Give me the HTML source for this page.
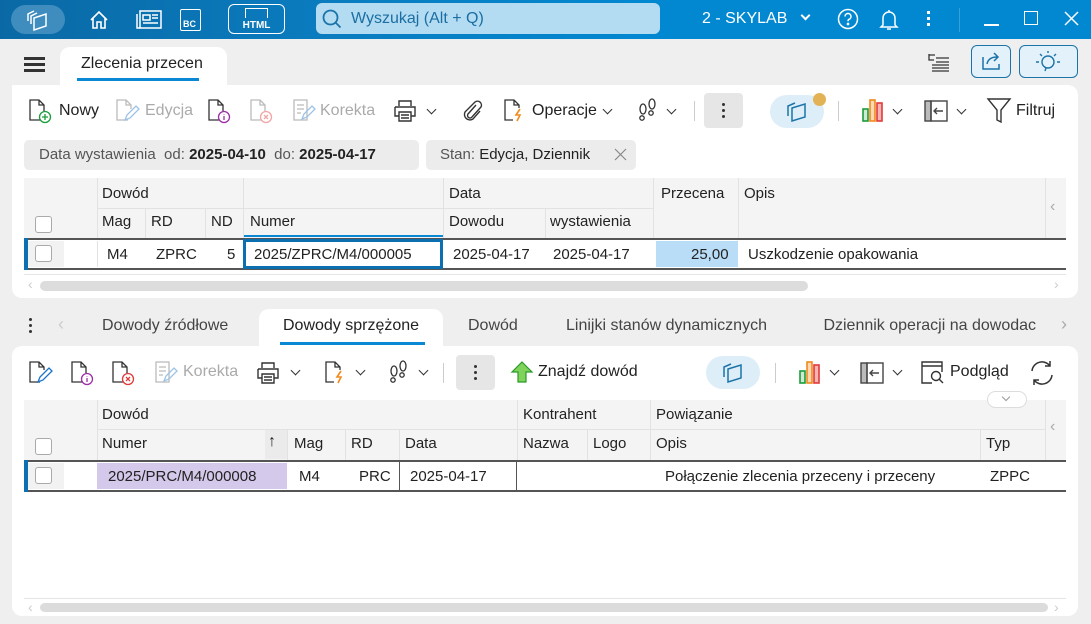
<!DOCTYPE html>
<html><head><meta charset="utf-8"><style>
*{box-sizing:border-box;margin:0;padding:0}
body{width:1091px;height:624px;overflow:hidden;background:#efefef;font-family:"Liberation Sans",sans-serif;font-size:15px;color:#222;position:relative}
.a{position:absolute}
.top{left:0;top:0;width:1091px;height:39px;background:linear-gradient(90deg,#0a69a5 0%,#0a7cbf 30%,#0288d1 60%,#0288d1 100%)}
.w{color:#fff}
.panel{background:#fff;border-radius:10px}
.tb{font-size:16px;color:#222}
.dis{color:#aaa}
.hdr{background:#f4f4f4}
.cell{position:absolute;font-size:15px;white-space:nowrap}
.vl{position:absolute;width:1px;background:#e2e2e2}
.cb{position:absolute;width:17px;height:17px;border:1px solid #aaa;border-radius:3px;background:#fff}
.chev{font-size:0;width:7px;height:7px;border-right:1.5px solid #333;border-bottom:1.5px solid #333;transform:rotate(45deg);margin-top:5px}
</style></head><body>
<div class="a top"></div>
<div class="a" style="left:11px;top:5px;width:54px;height:29px;border-radius:15px;background:#3f8cbf"></div>
<svg class="a" style="left:25px;top:9px" width="26" height="22" viewBox="0 0 26 22" fill="none" stroke="#fff" stroke-width="1.5"><path d="M3 12V5l6-3M6 15V7l6-3"/><path d="M9 9l12-4v12l-12 4z"/></svg>
<svg class="a" style="left:88px;top:9px" width="22" height="22" viewBox="0 0 22 22" fill="none" stroke="#fff" stroke-width="1.6"><path d="M3 11L11 3l8 8M5 9v10h4v-6h4v6h4V9"/></svg>
<svg class="a" style="left:136px;top:10px" width="26" height="20" viewBox="0 0 26 20" fill="none" stroke="#fff" stroke-width="1.5"><rect x="4" y="1" width="21" height="17"/><path d="M1 4v14h3M7 5h7v5H7zM16 5h6M16 8h6M7 13h15"/></svg>
<div class="a" style="left:180px;top:9px;width:21px;height:22px;border:1.5px solid #fff;border-radius:2px;color:#fff;font-size:9px;font-weight:bold;padding:9px 0 0 2px">BC</div>
<div class="a" style="left:228px;top:4px;width:57px;height:30px;border:1.5px solid #fff;border-radius:6px;color:#fff;font-size:10px;font-weight:bold;text-align:center;padding-top:15px">HTML</div>
<div class="a" style="left:245px;top:8px;width:23px;height:10px;border:1.3px solid #fff;border-bottom:none"></div>
<div class="a" style="left:316px;top:3px;width:344px;height:31px;border-radius:6px;background:#b3dcf2"></div>
<svg class="a" style="left:321px;top:8px" width="22" height="22" viewBox="0 0 22 22" fill="none" stroke="#1b73a8" stroke-width="1.8"><circle cx="9.5" cy="9.5" r="7"/><path d="M14.5 14.5l5 5"/></svg>
<div class="a" style="left:351px;top:10px;font-size:16px;color:#1b6ea3">Wyszukaj (Alt + Q)</div>
<div class="a w" style="left:702px;top:10px;font-size:16px">2 - SKYLAB</div>
<div class="a" style="left:802px;top:12px;width:7px;height:7px;border-right:2px solid #fff;border-bottom:2px solid #fff;transform:rotate(45deg)"></div>
<svg class="a" style="left:837px;top:8px" width="22" height="22" viewBox="0 0 22 22" fill="none" stroke="#fff" stroke-width="1.5"><circle cx="11" cy="11" r="9.5"/><path d="M8 8.5a3 3 0 1 1 4 2.8c-.8.4-1 1-1 2"/><circle cx="11" cy="16" r=".6" fill="#fff"/></svg>
<svg class="a" style="left:879px;top:8px" width="20" height="24" viewBox="0 0 20 24" fill="none" stroke="#fff" stroke-width="1.5"><path d="M4 17V10a6 6 0 0 1 12 0v7l2 2H2zM8 21h4M10 2v2"/></svg>
<div class="a" style="left:927px;top:11px;width:3px;height:3px;background:#fff;box-shadow:0 6px #fff,0 12px #fff"></div>
<div class="a" style="left:959px;top:8px;width:1px;height:24px;background:#3a9fd8"></div>
<div class="a" style="left:984px;top:24px;width:15px;height:1.5px;background:#fff"></div>
<div class="a" style="left:1024px;top:11px;width:14px;height:14px;border:1.5px solid #fff"></div>
<svg class="a" style="left:1064px;top:11px" width="15" height="15"><path d="M1 1l13 13M14 1L1 14" stroke="#fff" stroke-width="1.5"/></svg>

<!-- tab row -->
<div class="a" style="left:24px;top:57px;width:21px;height:3px;background:#333;box-shadow:0 6px #333,0 12px #333"></div>
<div class="a panel" style="left:60px;top:47px;width:167px;height:45px;border-radius:10px 10px 0 0"></div>
<div class="a" style="left:81px;top:55px;font-size:16px;color:#222">Zlecenia przecen</div>
<div class="a" style="left:77px;top:78px;width:122px;height:3px;background:#0b88d4"></div>
<svg class="a" style="left:927px;top:52px" width="24" height="22" fill="none" stroke="#333" stroke-width="1.3"><path d="M2 2v6h5M2 3h6M9 6h13M9 10h13M5 13h17M5 16h17M5 19h17"/></svg>
<div class="a" style="left:971px;top:45px;width:40px;height:33px;border:1.5px solid #1b73a8;border-radius:6px;background:#e3f1fa"></div>
<svg class="a" style="left:981px;top:51px" width="22" height="20" fill="none" stroke="#1b73a8" stroke-width="1.5"><path d="M2 6v12h16v-5M6 13c1-5 5-7 10-7M13 2l4 4-4 4"/></svg>
<div class="a" style="left:1019px;top:45px;width:59px;height:33px;border:1.5px solid #1b73a8;border-radius:6px;background:#e3f1fa"></div>
<svg class="a" style="left:1034px;top:50px" width="28" height="24" fill="none" stroke="#1b73a8" stroke-width="1.4"><circle cx="14" cy="12" r="6"/><path d="M2 12h3M23 12h3M6 4l2 2M22 4l-2 2M14 1v2M12 18l-1 3"/></svg>

<!-- upper panel -->
<div class="a panel" style="left:12px;top:85px;width:1066px;height:213px;border-radius:0 10px 10px 10px"></div>
<svg class="a" style="left:28px;top:98px" width="26" height="26" fill="none" stroke="#333" stroke-width="1.3"><path d="M13 22H2V2h9l5 5v6M11 2v5h5"/><circle cx="17" cy="19" r="5.5" stroke="#1a9c3a"/><path d="M17 16v6M14 19h6" stroke="#1a9c3a"/></svg>
<div class="a tb" style="left:59px;top:102px">Nowy</div>
<svg class="a" style="left:115px;top:98px" width="26" height="26" fill="none" stroke="#bbb" stroke-width="1.3"><path d="M13 22H2V2h9l5 5v4M11 2v5h5"/><path d="M10 22l2-5 9-9 3 3-9 9z" stroke="#9cc3e6"/></svg>
<div class="a tb dis" style="left:145px;top:102px">Edycja</div>
<svg class="a" style="left:207px;top:98px" width="26" height="26" fill="none" stroke="#333" stroke-width="1.3"><path d="M13 22H2V2h9l5 5v6M11 2v5h5"/><circle cx="17" cy="19" r="5.5" stroke="#9c2fa8"/><path d="M17 18v4M17 16v.5" stroke="#9c2fa8"/></svg>
<svg class="a" style="left:249px;top:98px" width="26" height="26" fill="none" stroke="#bbb" stroke-width="1.3"><path d="M13 22H2V2h9l5 5v6M11 2v5h5"/><circle cx="17" cy="19" r="5.5" stroke="#f2a6a6"/><path d="M15 17l4 4M19 17l-4 4" stroke="#f2a6a6"/></svg>
<svg class="a" style="left:291px;top:98px" width="26" height="26" fill="none" stroke="#bbb" stroke-width="1.3"><path d="M3 2h13v20H3zM6 7h7M6 11h7M6 15h4"/><path d="M11 21l2-5 8-8 3 3-8 8z" stroke="#9cc3e6"/></svg>
<div class="a tb dis" style="left:320px;top:102px">Korekta</div>
<svg class="a" style="left:392px;top:98px" width="26" height="26" fill="none" stroke="#333" stroke-width="1.4"><path d="M7 8V3h12v5M3 9h20v9h-4M7 18H3V9M7 14h12v9H7zM9 17h8M9 20h8"/></svg>
<div class="a chev" style="left:428px;top:101px">v</div>
<svg class="a" style="left:460px;top:98px" width="24" height="26" fill="none" stroke="#333" stroke-width="1.4"><path d="M16 7l-8 9a2.5 2.5 0 0 0 4 3l9-10a4 4 0 0 0-6-5L5 14a5.5 5.5 0 0 0 8 7l7-8"/></svg>
<svg class="a" style="left:503px;top:98px" width="26" height="26" fill="none" stroke="#333" stroke-width="1.3"><path d="M10 22H2V2h9l5 5v3M11 2v5h5"/><path d="M17 11l-4 6h4l-3 6" stroke="#f08a1c" stroke-width="1.6"/></svg>
<div class="a tb" style="left:532px;top:102px">Operacje</div>
<div class="a chev" style="left:604px;top:101px">v</div>
<svg class="a" style="left:636px;top:98px" width="24" height="26" fill="none" stroke="#333" stroke-width="1.3"><ellipse cx="7" cy="11" rx="3" ry="5"/><circle cx="6" cy="20" r="2.2"/><ellipse cx="16" cy="6" rx="3" ry="5"/><circle cx="15" cy="15" r="2.2"/></svg>
<div class="a chev" style="left:668px;top:101px">v</div>
<div class="a" style="left:694px;top:101px;width:1px;height:20px;background:#ccc"></div>
<div class="a" style="left:704px;top:93px;width:39px;height:35px;background:#e6e6e6;border-radius:4px"></div>
<div class="a" style="left:722px;top:103px;width:3px;height:3px;background:#333;box-shadow:0 6px #333,0 12px #333;border-radius:50%"></div>
<div class="a" style="left:770px;top:95px;width:54px;height:33px;background:#ddeef9;border-radius:17px"></div>
<svg class="a" style="left:784px;top:99px" width="26" height="24" fill="none" stroke="#1b73a8" stroke-width="1.5"><path d="M4 17V7l7-3"/><path d="M8 9l13-4v13l-13 4z"/></svg>
<div class="a" style="left:813px;top:93px;width:13px;height:13px;background:#e2b255;border-radius:50%"></div>
<div class="a" style="left:838px;top:101px;width:1px;height:20px;background:#ccc"></div>
<svg class="a" style="left:861px;top:98px" width="28" height="26" stroke-width="1.6"><rect x="2" y="11" width="5" height="12" fill="#cfe9d4" stroke="#1a9c3a"/><rect x="9" y="2" width="5" height="21" fill="#fbd9b4" stroke="#f08a1c"/><rect x="16" y="5" width="5" height="18" fill="#f5b5b5" stroke="#e23a3a"/></svg>
<div class="a chev" style="left:894px;top:101px">v</div>
<svg class="a" style="left:923px;top:98px" width="26" height="26" stroke-width="1.4"><rect x="2" y="3" width="6" height="20" fill="#bbb" stroke="#444"/><rect x="8" y="3" width="16" height="20" fill="none" stroke="#444"/><path d="M20 13h-8M14 10l-3 3 3 3" fill="none" stroke="#444"/></svg>
<div class="a chev" style="left:958px;top:101px">v</div>
<svg class="a" style="left:986px;top:97px" width="26" height="28" fill="none" stroke="#333" stroke-width="1.4"><path d="M2 2h22l-9 11v12l-4-2V13z"/></svg>
<div class="a tb" style="left:1016px;top:102px">Filtruj</div>

<!-- chips -->
<div class="a" style="left:24px;top:140px;width:395px;height:30px;background:#ececec;border-radius:5px"></div>
<div class="a" style="left:39px;top:146px;font-size:15px;color:#555">Data wystawienia &nbsp;od: <b style="color:#222;font-weight:bold">2025-04-10</b> &nbsp;do: <b style="color:#222">2025-04-17</b></div>
<div class="a" style="left:426px;top:140px;width:210px;height:30px;background:#ececec;border-radius:5px"></div>
<div class="a" style="left:440px;top:146px;font-size:15px;color:#555">Stan: <span style="color:#222">Edycja, Dziennik</span></div>
<svg class="a" style="left:614px;top:148px" width="13" height="13"><path d="M1 1l11 11M12 1L1 12" stroke="#888" stroke-width="1.2"/></svg>

<!-- upper grid -->
<div class="a hdr" style="left:24px;top:178px;width:1042px;height:60px"></div>
<div class="a" style="left:97px;top:208px;width:346px;height:1px;background:#e2e2e2"></div>
<div class="a" style="left:443px;top:208px;width:210px;height:1px;background:#e2e2e2"></div>
<div class="a" style="left:243px;top:235px;width:200px;height:2px;background:#0b88d4"></div>
<div class="vl" style="left:97px;top:178px;height:60px"></div>
<div class="vl" style="left:145px;top:208px;height:30px"></div>
<div class="vl" style="left:205px;top:208px;height:30px"></div>
<div class="vl" style="left:243px;top:178px;height:60px"></div>
<div class="vl" style="left:443px;top:178px;height:60px"></div>
<div class="vl" style="left:545px;top:208px;height:30px"></div>
<div class="vl" style="left:653px;top:178px;height:60px"></div>
<div class="vl" style="left:738px;top:178px;height:60px"></div>
<div class="vl" style="left:1045px;top:178px;height:60px"></div>
<div class="cell" style="left:102px;top:185px">Dowód</div>
<div class="cell" style="left:449px;top:185px">Data</div>
<div class="cell" style="left:661px;top:185px">Przecena</div>
<div class="cell" style="left:744px;top:185px">Opis</div>
<div class="cell" style="left:102px;top:213px">Mag</div>
<div class="cell" style="left:151px;top:213px">RD</div>
<div class="cell" style="left:211px;top:213px">ND</div>
<div class="cell" style="left:250px;top:213px">Numer</div>
<div class="cell" style="left:449px;top:213px">Dowodu</div>
<div class="cell" style="left:550px;top:213px">wystawienia</div>
<div class="cb" style="left:35px;top:216px"></div>
<div class="a" style="left:1050px;top:198px;color:#aaa;font-size:16px">&#8249;</div>
<div class="a" style="left:24px;top:238px;width:1042px;height:32px;border-top:2.5px solid #555;border-bottom:2.5px solid #555"></div>
<div class="a" style="left:24px;top:238px;width:4px;height:32px;background:#0b6fb0"></div>
<div class="a" style="left:28px;top:241px;width:36px;height:26px;background:#f2f2f2"></div>
<div class="cb" style="left:35px;top:245px"></div>
<div class="vl" style="left:97px;top:241px;height:26px"></div>
<div class="cell" style="left:107px;top:246px">M4</div>
<div class="cell" style="left:156px;top:246px">ZPRC</div>
<div class="cell" style="left:227px;top:246px">5</div>
<div class="a" style="left:243px;top:239px;width:200px;height:30px;border:3px solid #0b6fb0"></div>
<div class="cell" style="left:254px;top:246px">2025/ZPRC/M4/000005</div>
<div class="cell" style="left:453px;top:246px">2025-04-17</div>
<div class="cell" style="left:553px;top:246px">2025-04-17</div>
<div class="a" style="left:656px;top:241px;width:82px;height:26px;background:#b9ddf6"></div>
<div class="cell" style="left:691px;top:246px">25,00</div>
<div class="cell" style="left:748px;top:246px">Uszkodzenie opakowania</div>
<div class="a" style="left:24px;top:274px;width:1042px;height:1px;background:#e5e5e5"></div>
<div class="a" style="left:40px;top:281px;width:768px;height:10px;background:#dcdcdc;border-radius:5px"></div>
<div class="a" style="left:28px;top:276px;color:#ccc;font-size:14px">&#8249;</div>
<div class="a" style="left:1054px;top:276px;color:#ccc;font-size:14px">&#8250;</div>

<!-- lower tabs -->
<div class="a" style="left:29px;top:318px;width:3px;height:3px;background:#333;box-shadow:0 6px #333,0 12px #333;border-radius:50%"></div>
<div class="a" style="left:58px;top:314px;color:#ccc;font-size:18px">&#8249;</div>
<div class="a panel" style="left:259px;top:309px;width:184px;height:45px;border-radius:10px 10px 0 0"></div>
<div class="a" style="left:102px;top:317px;font-size:16px;color:#444">Dowody źródłowe</div>
<div class="a" style="left:283px;top:317px;font-size:16px;color:#222">Dowody sprzężone</div>
<div class="a" style="left:280px;top:342px;width:145px;height:3px;background:#0b88d4"></div>
<div class="a" style="left:468px;top:317px;font-size:16px;color:#444">Dowód</div>
<div class="a" style="left:566px;top:317px;font-size:16px;color:#444">Linijki stanów dynamicznych</div>
<div class="a" style="left:819px;top:317px;font-size:16px;color:#444;width:234px;overflow:hidden;white-space:nowrap">&nbsp;Dziennik operacji na dowodac</div>
<div class="a" style="left:1061px;top:314px;color:#aaa;font-size:18px">&#8250;</div>

<!-- lower panel -->
<div class="a panel" style="left:12px;top:346px;width:1066px;height:270px"></div>
<svg class="a" style="left:28px;top:360px" width="26" height="26" fill="none" stroke="#333" stroke-width="1.3"><path d="M12 22H2V2h9l5 5v3M11 2v5h5"/><path d="M10 22l2-5 9-9 3 3-9 9z" stroke="#1b73c8"/></svg>
<svg class="a" style="left:70px;top:360px" width="26" height="26" fill="none" stroke="#333" stroke-width="1.3"><path d="M13 22H2V2h9l5 5v6M11 2v5h5"/><circle cx="17" cy="19" r="5.5" stroke="#9c2fa8"/><path d="M17 18v4M17 16v.5" stroke="#9c2fa8"/></svg>
<svg class="a" style="left:111px;top:360px" width="26" height="26" fill="none" stroke="#333" stroke-width="1.3"><path d="M13 22H2V2h9l5 5v6M11 2v5h5"/><circle cx="17" cy="19" r="5.5" stroke="#e23a3a"/><path d="M15 17l4 4M19 17l-4 4" stroke="#e23a3a"/></svg>
<svg class="a" style="left:153px;top:360px" width="26" height="26" fill="none" stroke="#bbb" stroke-width="1.3"><path d="M3 2h13v20H3zM6 7h7M6 11h7M6 15h4"/><path d="M11 21l2-5 8-8 3 3-8 8z" stroke="#9cc3e6"/></svg>
<div class="a tb dis" style="left:183px;top:363px">Korekta</div>
<svg class="a" style="left:255px;top:360px" width="26" height="26" fill="none" stroke="#333" stroke-width="1.4"><path d="M7 8V3h12v5M3 9h20v9h-4M7 18H3V9M7 14h12v9H7zM9 17h8M9 20h8"/></svg>
<div class="a chev" style="left:292px;top:362px">v</div>
<svg class="a" style="left:324px;top:360px" width="26" height="26" fill="none" stroke="#333" stroke-width="1.3"><path d="M10 22H2V2h9l5 5v3M11 2v5h5"/><path d="M17 11l-4 6h4l-3 6" stroke="#f08a1c" stroke-width="1.6"/></svg>
<div class="a chev" style="left:357px;top:362px">v</div>
<svg class="a" style="left:387px;top:360px" width="24" height="26" fill="none" stroke="#333" stroke-width="1.3"><ellipse cx="7" cy="11" rx="3" ry="5"/><circle cx="6" cy="20" r="2.2"/><ellipse cx="16" cy="6" rx="3" ry="5"/><circle cx="15" cy="15" r="2.2"/></svg>
<div class="a chev" style="left:420px;top:362px">v</div>
<div class="a" style="left:443px;top:363px;width:1px;height:20px;background:#ccc"></div>
<div class="a" style="left:456px;top:355px;width:39px;height:35px;background:#e6e6e6;border-radius:4px"></div>
<div class="a" style="left:474px;top:365px;width:3px;height:3px;background:#333;box-shadow:0 6px #333,0 12px #333;border-radius:50%"></div>
<svg class="a" style="left:510px;top:360px" width="24" height="24"><path d="M12 2l10 10h-6v10H8V12H2z" fill="#7fd35a" stroke="#2a9a2a" stroke-width="1.2"/></svg>
<div class="a tb" style="left:538px;top:363px">Znajdź dowód</div>
<div class="a" style="left:706px;top:356px;width:54px;height:33px;background:#ddeef9;border-radius:17px"></div>
<svg class="a" style="left:720px;top:360px" width="26" height="24" fill="none" stroke="#1b73a8" stroke-width="1.5"><path d="M4 17V7l7-3"/><path d="M8 9l13-4v13l-13 4z"/></svg>
<div class="a" style="left:775px;top:363px;width:1px;height:20px;background:#ccc"></div>
<svg class="a" style="left:798px;top:360px" width="28" height="26" stroke-width="1.6"><rect x="2" y="11" width="5" height="12" fill="#cfe9d4" stroke="#1a9c3a"/><rect x="9" y="2" width="5" height="21" fill="#fbd9b4" stroke="#f08a1c"/><rect x="16" y="5" width="5" height="18" fill="#f5b5b5" stroke="#e23a3a"/></svg>
<div class="a chev" style="left:831px;top:362px">v</div>
<svg class="a" style="left:859px;top:360px" width="26" height="26" stroke-width="1.4"><rect x="2" y="3" width="6" height="20" fill="#bbb" stroke="#444"/><rect x="8" y="3" width="16" height="20" fill="none" stroke="#444"/><path d="M20 13h-8M14 10l-3 3 3 3" fill="none" stroke="#444"/></svg>
<div class="a chev" style="left:894px;top:362px">v</div>
<svg class="a" style="left:920px;top:360px" width="26" height="26" fill="none" stroke="#333" stroke-width="1.4"><path d="M12 23H2V2h20v10M2 6h20"/><circle cx="16" cy="16" r="4.5"/><path d="M19 19l4 4"/></svg>
<div class="a tb" style="left:950px;top:363px">Podgląd</div>
<svg class="a" style="left:1029px;top:359px" width="26" height="28" fill="none" stroke="#333" stroke-width="1.5"><path d="M3 12a10 10 0 0 1 18-5M23 16a10 10 0 0 1-18 5M21 2v5h-5M5 26v-5h5"/></svg>

<!-- lower grid -->
<div class="a hdr" style="left:24px;top:400px;width:1042px;height:60px"></div>
<div class="a" style="left:97px;top:429px;width:948px;height:1px;background:#e2e2e2"></div>
<div class="a" style="left:265px;top:430px;width:22px;height:29px;background:#ebebeb"></div>
<div class="vl" style="left:97px;top:400px;height:60px"></div>
<div class="vl" style="left:287px;top:430px;height:30px"></div>
<div class="vl" style="left:345px;top:430px;height:30px"></div>
<div class="vl" style="left:399px;top:430px;height:30px"></div>
<div class="vl" style="left:517px;top:400px;height:60px"></div>
<div class="vl" style="left:587px;top:430px;height:30px"></div>
<div class="vl" style="left:650px;top:400px;height:60px"></div>
<div class="vl" style="left:980px;top:430px;height:30px"></div>
<div class="vl" style="left:1045px;top:400px;height:60px"></div>
<div class="cell" style="left:102px;top:406px">Dowód</div>
<div class="cell" style="left:523px;top:406px">Kontrahent</div>
<div class="cell" style="left:656px;top:406px">Powiązanie</div>
<div class="cell" style="left:102px;top:435px">Numer</div>
<div class="cell" style="left:268px;top:433px;font-size:16px">&#8593;</div>
<div class="cell" style="left:294px;top:435px">Mag</div>
<div class="cell" style="left:351px;top:435px">RD</div>
<div class="cell" style="left:405px;top:435px">Data</div>
<div class="cell" style="left:523px;top:435px">Nazwa</div>
<div class="cell" style="left:593px;top:435px">Logo</div>
<div class="cell" style="left:656px;top:435px">Opis</div>
<div class="cell" style="left:986px;top:435px">Typ</div>
<div class="cb" style="left:35px;top:438px"></div>
<div class="a" style="left:1050px;top:418px;color:#aaa;font-size:16px">&#8249;</div>
<div class="a" style="left:987px;top:391px;width:40px;height:17px;border:1px solid #ddd;border-radius:9px;background:#fff"></div>
<div class="a" style="left:1003px;top:394px;width:6px;height:6px;border-right:1.2px solid #999;border-bottom:1.2px solid #999;transform:rotate(45deg)"></div>
<div class="a" style="left:24px;top:460px;width:1042px;height:32px;border-top:2.5px solid #555;border-bottom:2.5px solid #555"></div>
<div class="a" style="left:24px;top:460px;width:4px;height:32px;background:#0b6fb0"></div>
<div class="a" style="left:28px;top:463px;width:36px;height:26px;background:#f2f2f2"></div>
<div class="cb" style="left:35px;top:467px"></div>
<div class="vl" style="left:97px;top:463px;height:26px"></div>
<div class="a" style="left:97px;top:463px;width:190px;height:26px;background:#d4c9ea"></div>
<div class="cell" style="left:108px;top:468px">2025/PRC/M4/000008</div>
<div class="cell" style="left:299px;top:468px">M4</div>
<div class="cell" style="left:359px;top:468px">PRC</div>
<div class="a" style="left:399px;top:462px;width:118px;height:28px;border-left:1.5px solid #555;border-right:1.5px solid #555"></div>
<div class="cell" style="left:410px;top:468px">2025-04-17</div>
<div class="cell" style="left:665px;top:468px">Połączenie zlecenia przeceny i przeceny</div>
<div class="cell" style="left:990px;top:468px">ZPPC</div>
<div class="a" style="left:24px;top:598px;width:1042px;height:1px;background:#e5e5e5"></div>
<div class="a" style="left:40px;top:603px;width:1008px;height:9px;background:#dcdcdc;border-radius:5px"></div>
<div class="a" style="left:28px;top:599px;color:#ccc;font-size:14px">&#8249;</div>
<div class="a" style="left:1054px;top:599px;color:#ccc;font-size:14px">&#8250;</div>
</body></html>
